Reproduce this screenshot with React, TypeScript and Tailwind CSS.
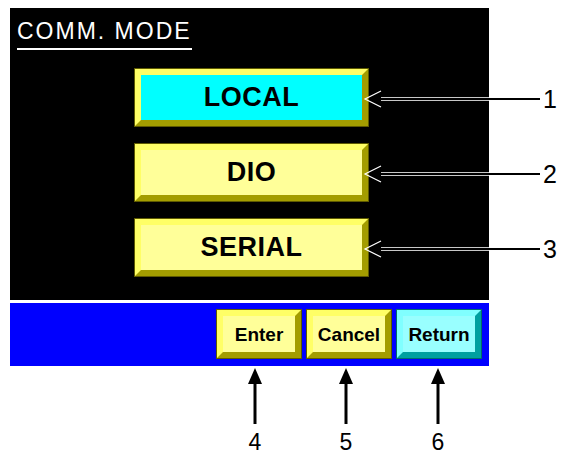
import React from 'react'

// Панель выбора режима связи с выносками 1–6
type Tone = 'yellow' | 'cyan' | 'lightcyan'

const TONES: Record<Tone, string> = {
  yellow: 'bg-[#ffff99] border-t-[#ffff66] border-l-[#ffff66] border-b-[#a39d00] border-r-[#a39d00]',
  cyan: 'bg-[#00ffff] border-t-[#ffff66] border-l-[#ffff66] border-b-[#a39d00] border-r-[#a39d00]',
  lightcyan: 'bg-[#99ffff] border-t-[#80ffff] border-l-[#80ffff] border-b-[#00a0a0] border-r-[#00a0a0]',
}

function BevelButton({
  label,
  tone,
  size,
}: {
  label: string
  tone: Tone
  size: 'big' | 'small'
}) {
  const outer = tone === 'lightcyan' ? 'border-[#006b6b]' : 'border-[#5e5a00]'
  const dims = size === 'big' ? 'w-[235px] h-[59px]' : 'w-[86px] h-[50px]'
  const text = size === 'big' ? 'text-[27px] tracking-[0.5px]' : 'text-[19px]'
  return (
    <div className={`border ${outer} ${dims} flex`}>
      <div
        className={`flex-1 border-[6px] ${TONES[tone]} flex items-center justify-center font-bold text-black leading-none ${text}`}
      >
        {label}
      </div>
    </div>
  )
}

const RIGHT_ARROWS = [
  { y: 99, n: '1', top: 'top-[87px]' },
  { y: 174, n: '2', top: 'top-[162px]' },
  { y: 249, n: '3', top: 'top-[237px]' },
]

const BOTTOM_ARROWS = [
  { x: 255, n: '4', left: 'left-[243px]' },
  { x: 346, n: '5', left: 'left-[334px]' },
  { x: 438, n: '6', left: 'left-[426px]' },
]

export default function App() {
  return (
    <div className="relative w-[562px] h-[455px] bg-white overflow-hidden font-['Liberation_Sans',Arial,sans-serif]">
      <div className="pt-[8px] pl-[10px]">
        {/* Экран */}
        <div className="w-[479px] h-[292px] bg-black flex flex-col">
          <div className="pl-[7px] pt-[12px]">
            <span className="inline-block text-white text-[23px] leading-none tracking-[2px] pb-[5px] border-b-2 border-white">
              COMM. MODE
            </span>
          </div>
          <div className="mt-[18px] ml-[124px] flex flex-col gap-[16px]">
            <BevelButton label="LOCAL" tone="cyan" size="big" />
            <BevelButton label="DIO" tone="yellow" size="big" />
            <BevelButton label="SERIAL" tone="yellow" size="big" />
          </div>
        </div>

        {/* Нижняя панель */}
        <div className="mt-[3px] w-[479px] h-[63px] bg-[#0000ff] flex justify-end items-start pt-[6px] pr-[7px] gap-[4px]">
          <BevelButton label="Enter" tone="yellow" size="small" />
          <BevelButton label="Cancel" tone="yellow" size="small" />
          <BevelButton label="Return" tone="lightcyan" size="small" />
        </div>
      </div>

      {/* Выноски */}
      <svg
        className="absolute inset-0 pointer-events-none"
        width={562}
        height={455}
        viewBox="0 0 562 455"
      >
        {RIGHT_ARROWS.map(a => (
          <g key={a.n}>
            <line x1={381} y1={a.y} x2={489} y2={a.y} stroke="#c8c8c8" strokeWidth={4} />
            <line x1={381} y1={a.y} x2={540} y2={a.y} stroke="#000" strokeWidth={2} />
            <polyline
              points={`381,${a.y - 8} 365,${a.y} 381,${a.y + 8}`}
              fill="none"
              stroke="#fff"
              strokeWidth={1.2}
            />
          </g>
        ))}
        {BOTTOM_ARROWS.map(a => (
          <g key={a.n}>
            <line x1={a.x} y1={380} x2={a.x} y2={424} stroke="#000" strokeWidth={3} />
            <polygon points={`${a.x},368 ${a.x - 7},384 ${a.x + 7},384`} fill="#000" />
          </g>
        ))}
      </svg>

      {RIGHT_ARROWS.map(a => (
        <span
          key={a.n}
          className={`absolute left-[541px] ${a.top} w-[18px] text-center text-[25px] leading-none text-black`}
        >
          {a.n}
        </span>
      ))}
      {BOTTOM_ARROWS.map(a => (
        <span
          key={a.n}
          className={`absolute ${a.left} top-[431px] w-[24px] text-center text-[23px] leading-none text-black`}
        >
          {a.n}
        </span>
      ))}
    </div>
  )
}
